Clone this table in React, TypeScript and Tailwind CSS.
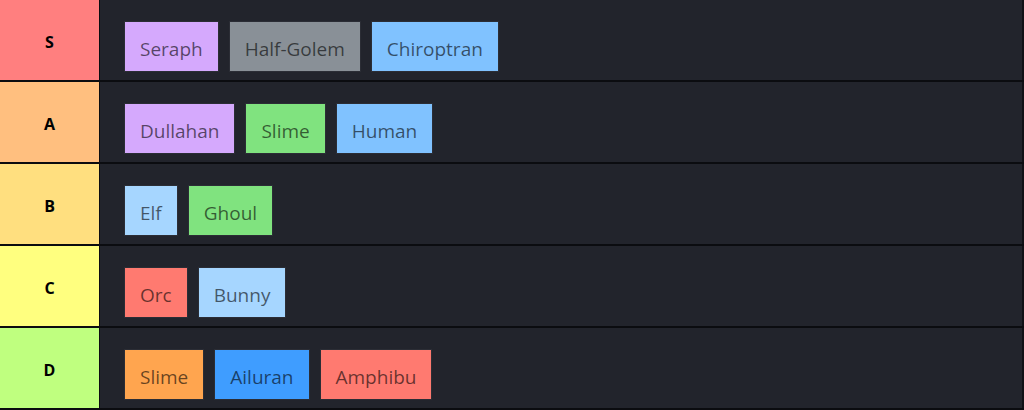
import React from 'react';

interface Item {
  name: string;
  color: string;
}

interface Tier {
  label: string;
  color: string;
  items: Item[];
}

const tiers: Tier[] = [
  {
    label: 'S',
    color: 'bg-[#ff7f7f]',
    items: [
      { name: 'Seraph', color: 'bg-[#d5a9fd]' },
      { name: 'Half-Golem', color: 'bg-[#899097]' },
      { name: 'Chiroptran', color: 'bg-[#80c2ff]' },
    ],
  },
  {
    label: 'A',
    color: 'bg-[#ffbf7f]',
    items: [
      { name: 'Dullahan', color: 'bg-[#d5a9fd]' },
      { name: 'Slime', color: 'bg-[#80e37f]' },
      { name: 'Human', color: 'bg-[#80c2ff]' },
    ],
  },
  {
    label: 'B',
    color: 'bg-[#ffdf7f]',
    items: [
      { name: 'Elf', color: 'bg-[#a6d6ff]' },
      { name: 'Ghoul', color: 'bg-[#80e37f]' },
    ],
  },
  {
    label: 'C',
    color: 'bg-[#ffff7f]',
    items: [
      { name: 'Orc', color: 'bg-[#ff7a70]' },
      { name: 'Bunny', color: 'bg-[#a6d6ff]' },
    ],
  },
  {
    label: 'D',
    color: 'bg-[#bfff7f]',
    items: [
      { name: 'Slime', color: 'bg-[#ffa54f]' },
      { name: 'Ailuran', color: 'bg-[#3f9dff]' },
      { name: 'Amphibu', color: 'bg-[#ff7a70]' },
    ],
  },
];

export default function App() {
  return (
    <div className="w-[1024px] h-[410px] bg-black overflow-hidden font-['Open_Sans',sans-serif]">
      {tiers.map((tier) => (
        <div key={tier.label} className="flex h-[82px] border-b-2 border-[#0b0c10]">
          <div
            className={`w-[100px] shrink-0 flex items-center justify-center border-r border-[#0b0c10] ${tier.color}`}
          >
            <span className="text-[16px] font-bold text-black pt-[4px]">{tier.label}</span>
          </div>
          <div className="flex-1 bg-[#22242c] border-r-2 border-[#101116] flex items-start gap-[10px] pl-6 pt-[21px]">
            {tier.items.map((item, i) => (
              <div
                key={i}
                className={`h-[51px] px-[15px] pt-[5px] flex items-center text-[19px] text-[rgba(0,0,0,0.6)] border border-[#2b2d35] ${item.color}`}
              >
                {item.name}
              </div>
            ))}
          </div>
        </div>
      ))}
    </div>
  );
}
